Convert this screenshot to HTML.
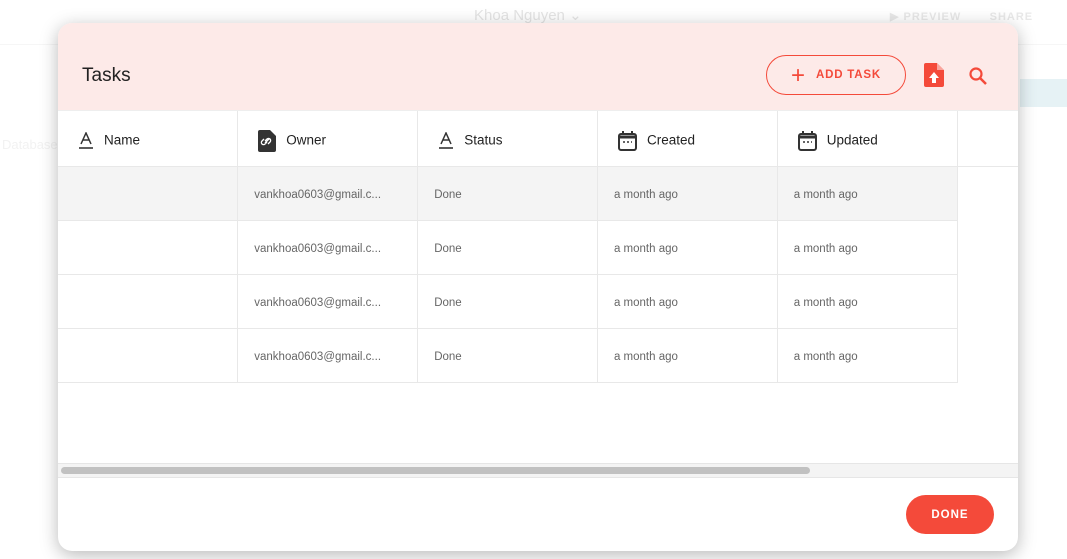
<!DOCTYPE html>
<html><head><meta charset="utf-8"><style>
*{box-sizing:border-box;margin:0;padding:0}
body{width:1067px;height:559px;overflow:hidden;background:#fff;font-family:"Liberation Sans",sans-serif;position:relative;color:#222}
.bg{position:absolute;color:#f0f0f0;font-size:13px}
.modal{position:absolute;left:58px;top:23px;width:960px;height:528px;background:#fff;border-radius:14px;overflow:hidden;box-shadow:0 4px 18px rgba(0,0,0,.28)}
.hd{height:88px;background:#fdeae8;position:relative;border-bottom:1px solid #eee}
.hd h1{position:absolute;left:24px;top:42px;font-size:19px;font-weight:normal;color:#222}
.add{position:absolute;left:708px;top:32px;width:140px;height:40px;border:1px solid #f44a3a;border-radius:20px;color:#f44a3a;font-size:11.5px;font-weight:bold;letter-spacing:.8px;padding-left:49px;line-height:39px}
.add:before{content:"+";position:absolute;left:24px;top:0px;font-size:24px;font-weight:normal}
table{position:absolute;top:88px;left:0;border-collapse:collapse}
td,th{width:180px;border-right:1px solid #e8e8e8;border-bottom:1px solid #e8e8e8;text-align:left;padding-left:16px}
th{height:55px;font-weight:normal;font-size:13.5px;color:#222;padding-left:20px;padding-top:5px}
td{height:54px;font-size:11.5px;color:#666;padding-top:4px}
th svg{vertical-align:middle;margin-right:10px}
tr.g td{background:#f4f4f4}
.done{position:absolute;left:848px;top:472px;width:88px;height:39px;border-radius:20px;background:#f44a3a;color:#fff;font-size:11.5px;font-weight:bold;letter-spacing:1px;text-align:center;line-height:41px}
</style></head><body>
<div class="bg" style="left:474px;top:6px;font-size:15px;color:#e4e4e4">Khoa Nguyen ⌄</div>
<div class="bg" style="left:890px;top:10px;font-size:11px;font-weight:bold;color:#e8e8e8;letter-spacing:1px">▶ PREVIEW &nbsp;&nbsp;&nbsp;&nbsp;&nbsp; SHARE</div>
<div class="bg" style="left:2px;top:137px;color:#f2f2f2">Database</div>
<div class="bg" style="left:1020px;top:79px;width:47px;height:28px;background:#e6f2f5"></div>
<div class="bg" style="left:0;top:0;width:1067px;height:45px;border-bottom:1px solid #f6f6f6"></div>
<div class="modal">
<div class="hd"><h1>Tasks</h1><div class="add">ADD TASK</div>
<svg style="position:absolute;left:866px;top:40px" width="20" height="24" viewBox="0 0 20 24"><path d="M0 2a2 2 0 0 1 2-2h11l7 7v15a2 2 0 0 1-2 2H2a2 2 0 0 1-2-2z" fill="#f44a3a"/><path d="M13 0v7h7" fill="#fff" opacity=".5"/><path d="M10 9l-5 6h3v5h4v-5h3z" fill="#fff"/></svg>
<svg style="position:absolute;left:910px;top:43px" width="20" height="20" viewBox="0 0 20 20"><circle cx="8" cy="8" r="5.5" fill="none" stroke="#f44a3a" stroke-width="2.2"/><path d="M12 12l6 6" stroke="#f44a3a" stroke-width="2.5"/></svg>
</div>
<table>
<tr><th><svg width="16" height="18" viewBox="0 0 16 18"><path d="M3 12L8 1l5 11M5 8h6" fill="none" stroke="#333" stroke-width="1.5"/><path d="M1 16h14" stroke="#333" stroke-width="1.6"/></svg>Name</th>
<th><svg width="18" height="22" viewBox="0 0 18 22"><path d="M0 2a2 2 0 0 1 2-2h10l6 6v14a2 2 0 0 1-2 2H2a2 2 0 0 1-2-2z" fill="#333"/><path d="M6 9l-2 2a2 2 0 0 0 3 3l2-2M10 14l2-2a2 2 0 0 0-3-3l-2 2M7 13l4-4" fill="none" stroke="#fff" stroke-width="1.3"/></svg>Owner</th>
<th><svg width="16" height="18" viewBox="0 0 16 18"><path d="M3 12L8 1l5 11M5 8h6" fill="none" stroke="#333" stroke-width="1.5"/><path d="M1 16h14" stroke="#333" stroke-width="1.6"/></svg>Status</th>
<th><svg width="19" height="20" viewBox="0 0 19 20"><rect x="1" y="3" width="17" height="16" rx="2" fill="none" stroke="#333" stroke-width="2"/><path d="M1 6h17" stroke="#333" stroke-width="3"/><path d="M5 0v4M14 0v4" stroke="#333" stroke-width="2"/><path d="M5 11h2M9 11h2M13 11h1" stroke="#333" stroke-width="1.6"/></svg>Created</th>
<th><svg width="19" height="20" viewBox="0 0 19 20"><rect x="1" y="3" width="17" height="16" rx="2" fill="none" stroke="#333" stroke-width="2"/><path d="M1 6h17" stroke="#333" stroke-width="3"/><path d="M5 0v4M14 0v4" stroke="#333" stroke-width="2"/><path d="M5 11h2M9 11h2M13 11h1" stroke="#333" stroke-width="1.6"/></svg>Updated</th>
<th style="width:61px;border-right:none"></th></tr>
<tr class="g"><td></td><td>vankhoa0603@gmail.c...</td><td>Done</td><td>a month ago</td><td>a month ago</td></tr>
<tr><td></td><td>vankhoa0603@gmail.c...</td><td>Done</td><td>a month ago</td><td>a month ago</td></tr>
<tr><td></td><td>vankhoa0603@gmail.c...</td><td>Done</td><td>a month ago</td><td>a month ago</td></tr>
<tr><td></td><td>vankhoa0603@gmail.c...</td><td>Done</td><td>a month ago</td><td>a month ago</td></tr>
</table>
<div style="position:absolute;left:0;top:440px;width:960px;height:15px;background:#f4f4f4;border-top:1px solid #e6e6e6;border-bottom:1px solid #e6e6e6"></div>
<div style="position:absolute;left:3px;top:444px;width:749px;height:7px;border-radius:4px;background:#c1c1c1"></div>
<div class="done">DONE</div>
</div>
</body></html>
